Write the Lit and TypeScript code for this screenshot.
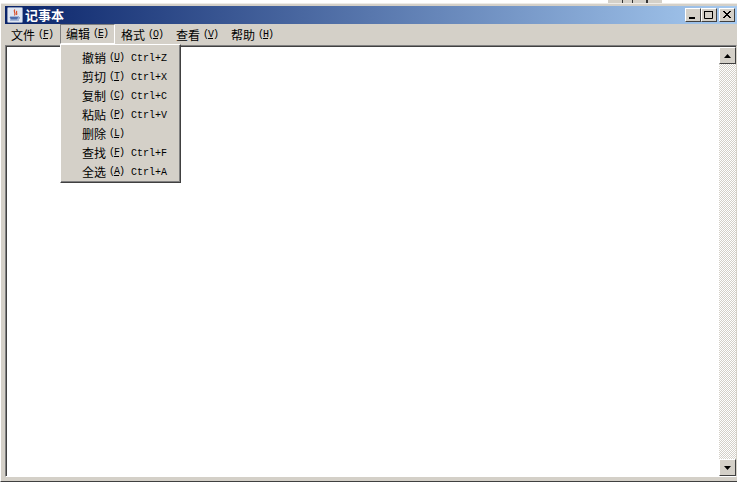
import { LitElement, html, css } from "lit";
import { customElement } from "lit/decorators.js";

const items: [string, string, string][] = [
  ["撤销", "U", "Ctrl+Z"],
  ["剪切", "T", "Ctrl+X"],
  ["复制", "C", "Ctrl+C"],
  ["粘贴", "P", "Ctrl+V"],
  ["删除", "L", ""],
  ["查找", "F", "Ctrl+F"],
  ["全选", "A", "Ctrl+A"],
];
const menus: [string, string][] = [["文件", "F"], ["编辑", "E"], ["格式", "O"], ["查看", "V"], ["帮助", "H"]];

@customElement("app-root")
export class AppRoot extends LitElement {
  static styles = css`
    :host { display: block; width: 739px; height: 483px; position: relative; overflow: hidden; background: #fff;
      font-family: "Noto Sans CJK SC", "DejaVu Sans Mono", monospace; color: #000; }
    .strip { height: 3px; display: flex; background: #fff; }
    .strip i { display: block; margin-left: 608px; width: 54px;
      background: linear-gradient(90deg, #d4d0c8 14px, #333 14px 15px, #d4d0c8 15px 24px, #333 24px 25px, #d4d0c8 25px 38px, #333 38px 40px, #d4d0c8 40px); }
    .win { height: 479px; margin-right: 2px; background: #d4d0c8; border-left: 1px solid #fff; border-bottom: 1px solid #404040; box-shadow: inset 0 1px 0 #eeece8;
      padding: 3px 0 0 4px; box-sizing: border-box; display: flex; flex-direction: column; }
    .title { height: 18px; background: linear-gradient(90deg, #0a246a, #a6caf0); display: flex; align-items: center; padding: 0 2px 0 2px; color: #fff; }
    .title svg.ico { margin-left: 0; }
    .title b { font-size: 13px; font-weight: 700; margin-left: 2px; flex: 1; line-height: 18px; margin-top: -1px; }
    .btn { width: 16px; height: 14px; box-sizing: border-box; background: #d4d0c8; display: flex; align-items: center; justify-content: center;
      border: 1px solid; border-color: #fff #404040 #404040 #fff; }
    .btn.last { margin-left: 2px; }
    .menubar { height: 20px; display: flex; align-items: center; }
    .m { width: 55px; height: 20px; box-sizing: border-box; display: flex; align-items: center; padding: 1px 0 0 6px; font-size: 12px; gap: 3px; white-space: nowrap; line-height: 18px; }
    .m.open { border: 1px solid; border-color: #808080 #fff #fff #808080; padding: 0 0 0 5px; }
    .ul { font-size: 10px; font-family: "Liberation Mono", monospace; letter-spacing: -1px; }
    .ul u { text-underline-offset: 1px; }
    .edit { flex: 1; margin: 1px 0 4px 0; display: flex; background: #fff; border: 1px solid; border-color: #808080 #d4d0c8 #fff #808080; box-shadow: inset 1px 1px 0 #404040; min-height: 0; }
    .text { flex: 1; }
    .sb { width: 17px; display: flex; flex-direction: column; justify-content: space-between; margin-top: 1px;
      background: repeating-conic-gradient(#d4d0c8 0 25%, #fff 0 50%) 0 0 / 2px 2px; }
    .sbb { height: 17px; box-sizing: border-box; background: #d4d0c8; border: 1px solid; border-color: #fff #404040 #404040 #fff; display: flex; align-items: center; justify-content: center; }
    .menu { position: absolute; left: 60px; top: 44px; width: 121px; height: 139px; box-sizing: border-box; background: #d4d0c8;
      border: 1px solid; border-color: #fff #404040 #404040 #fff; box-shadow: inset -1px -1px 0 #808080; padding-top: 4px; }
    .row { height: 19px; display: flex; align-items: center; font-size: 12px; padding-left: 21px; white-space: nowrap; line-height: 18px; }
    .row .l { width: 49px; display: flex; gap: 3px; align-items: center; margin-top: -2px; }
    .row .k { font-family: "Liberation Mono", monospace; font-size: 10px; }
  `;

  render() {
    return html`
      <div class="strip"><i></i></div>
      <div class="win">
        <div class="title">
          <svg class="ico" width="16" height="16" viewBox="0 0 16 16"><rect x="0.5" y="0.5" width="15" height="15" rx="1" fill="#dfe6f2" stroke="#8a97b8"/><path d="M3 10h8l-1 2H4zM3 13h9" fill="#4f6fae" stroke="#4f6fae" stroke-width="0.8"/><path d="M8 2.5c-2.5 2 1.5 3-.5 6M10 4c-1.5 1 .5 2-.5 4" stroke="#d8502a" fill="none" stroke-width="1.2"/><path d="M11.5 9.5a1.5 1.5 0 0 1 0 2.5" stroke="#4f6fae" fill="none"/></svg>
          <b>记事本</b>
          <span class="btn"><svg width="10" height="10"><rect x="1" y="7" width="6" height="2" fill="#000"/></svg></span>
          <span class="btn"><svg width="10" height="10"><path d="M0.5 1.5h8v7h-8z M0 1.5h9" fill="none" stroke="#000"/></svg></span>
          <span class="btn last"><svg width="10" height="10"><path d="M1 1l7 7M2 1l7 7M8 1l-7 7M9 1l-7 7" stroke="#000" fill="none"/></svg></span>
        </div>
        <div class="menubar">
          ${menus.map(([t, k]) => html`<div class="m ${k === "E" ? "open" : ""}">${t}<span class="ul">(<u>${k}</u>)</span></div>`)}
        </div>
        <div class="edit">
          <div class="text"></div>
          <div class="sb">
            <div class="sbb"><svg width="7" height="4"><path d="M3.5 0L7 4H0z" fill="#000"/></svg></div>
            <div class="sbb"><svg width="7" height="4"><path d="M0 0h7L3.5 4z" fill="#000"/></svg></div>
          </div>
        </div>
      </div>
      <div class="menu">
        ${items.map(([t, u, k]) => html`<div class="row"><span class="l">${t}<span class="ul">(<u>${u}</u>)</span></span><span class="k">${k}</span></div>`)}
      </div>
    `;
  }
}
